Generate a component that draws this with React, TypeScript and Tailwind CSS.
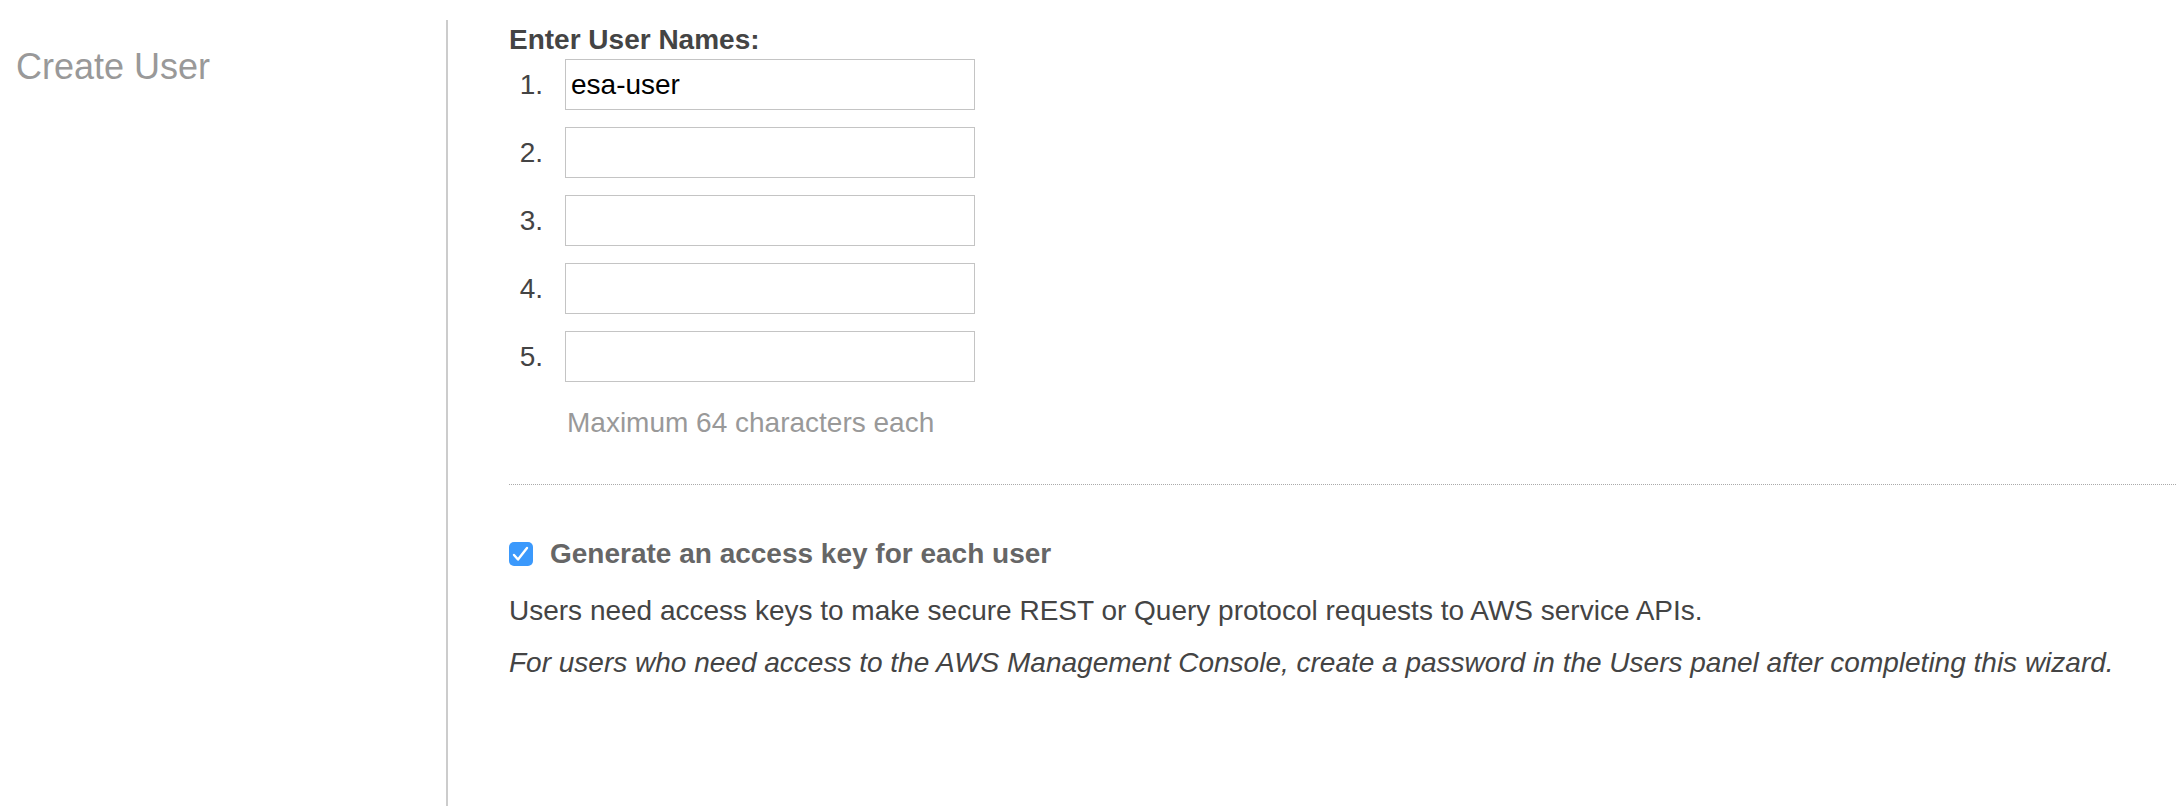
import React from "react";

export default function App() {
  const rows = ["esa-user", "", "", "", ""];
  return (
    <div
      className="flex w-[2176px] h-[806px] bg-white overflow-hidden"
      style={{ fontFamily: '"Liberation Sans", Arial, Helvetica, sans-serif' }}
    >
      <div className="w-[446px] shrink-0 pl-[16px] pt-[47px]">
        <div className="text-[36px] leading-[40px] text-[#999999]">Create User</div>
      </div>
      <div className="flex-1 mt-[20px] border-l-2 border-[#cccccc] pl-[61px] pt-[4px]">
        <div className="text-[28px] leading-[32px] font-bold text-[#444444]">Enter User Names:</div>
        <div className="mt-[3px] flex flex-col gap-[17px]">
          {rows.map((v, i) => (
            <div key={i} className="flex items-center">
              <div className="w-[34px] text-right text-[28px] leading-[32px] text-[#444444]">{i + 1}.</div>
              <div className="ml-[22px] w-[410px] h-[51px] border border-[#c4c4c4] bg-white flex items-center pl-[5px] text-[28px] text-black">
                {v}
              </div>
            </div>
          ))}
        </div>
        <div className="mt-[25px] pl-[58px] text-[28px] leading-[32px] text-[#999999]">Maximum 64 characters each</div>
        <div className="mt-[45px] border-t border-dotted border-[#aaaaaa]" />
        <div className="mt-[53px] flex items-center">
          <div className="w-[24px] h-[24px] rounded-[5px] bg-[#3b99fc] shrink-0">
            <svg width="24" height="24" viewBox="0 0 24 24">
              <path d="M5 13 L9 17.5 L18 6" fill="none" stroke="white" strokeWidth="2.4" strokeLinecap="round" strokeLinejoin="round" />
            </svg>
          </div>
          <div className="ml-[17px] text-[28px] leading-[32px] font-bold text-[#666666]">Generate an access key for each user</div>
        </div>
        <div className="mt-[25px] text-[28px] leading-[32px] text-[#444444]">
          Users need access keys to make secure REST or Query protocol requests to AWS service APIs.
        </div>
        <div className="mt-[20px] text-[28px] leading-[32px] italic text-[#444444]">
          For users who need access to the AWS Management Console, create a password in the Users panel after completing this wizard.
        </div>
      </div>
    </div>
  );
}
